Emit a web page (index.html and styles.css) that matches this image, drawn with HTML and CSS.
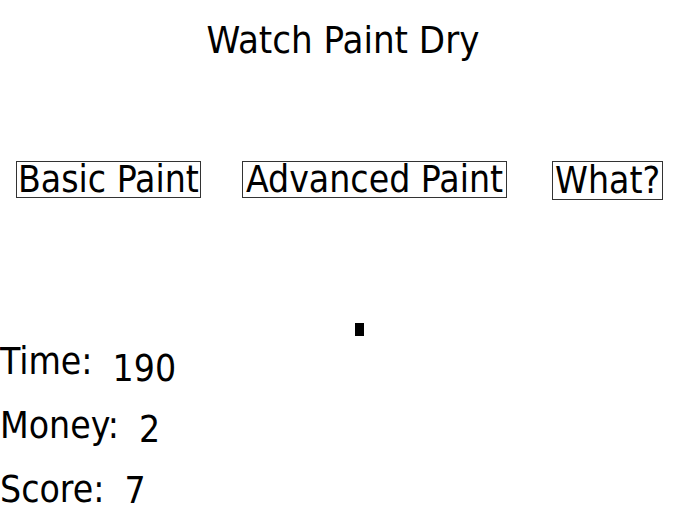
FILE: index.html
```html
<!DOCTYPE html>
<html lang="en">
<head>
    <meta charset="UTF-8">
    <meta name="viewport" content="width=device-width, initial-scale=1.0">
    <title>Watch Paint Dry</title>
    <link rel="stylesheet" href="styles.css">
</head>
<body>
    <h1 class="title">Watch Paint Dry</h1>

    <div class="menu">
        <button id="basicButton" class="paint-btn basic">Basic Paint</button>
        <button id="advancedButton" class="paint-btn advanced">Advanced Paint</button>
        <button id="whatButton" class="paint-btn what">What?</button>
    </div>

    <div class="wall">
        <div class="paint-dot"></div>
    </div>

    <div class="stats">
        <div class="stat stat-time">
            <span class="stat-label">Time:</span>
            <span class="stat-value" id="timeValue">190</span>
        </div>
        <div class="stat stat-money">
            <span class="stat-label">Money:</span>
            <span class="stat-value" id="moneyValue">2</span>
        </div>
        <div class="stat stat-score">
            <span class="stat-label">Score:</span>
            <span class="stat-value" id="scoreValue">7</span>
        </div>
    </div>
</body>
</html>
```

FILE: styles.css
```css
body {
    font-family: "DejaVu Sans Condensed", "DejaVu Sans", sans-serif;
    font-stretch: condensed;
    font-size: 37px;
    color: #000;
    background: #fff;
    margin: 0;
}

.title {
    font-size: 38px;
    font-weight: normal;
    text-align: center;
    margin: 19px 0 0;
    line-height: 43px;
}

.menu {
    display: flex;
    align-items: flex-start;
    margin-top: 99px;
    padding-left: 16px;
}

.paint-btn {
    font: inherit;
    color: inherit;
    background: none;
    border: 1px solid #333;
    padding: 0 1px;
    line-height: 35px;
    cursor: pointer;
}

.advanced {
    margin-left: 41px;
    padding: 0 3px;
}

.what {
    margin-left: 45px;
    padding: 1px 2px;
}

.wall {
    margin-top: 123px;
    height: 13px;
    padding-left: 355px;
}

.paint-dot {
    width: 9px;
    height: 13px;
    background: #000;
}

.stats {
    display: flex;
    flex-direction: column;
    gap: 21px;
    margin-top: 4px;
}

.stat {
    display: flex;
    align-items: flex-start;
    height: 43px;
    line-height: 43px;
}

.stat-value {
    margin-left: 20px;
}

.stat-time .stat-value {
    padding-top: 7px;
}

.stat-money .stat-value {
    padding-top: 4px;
}

.stat-score .stat-value {
    padding-top: 1px;
}
```
